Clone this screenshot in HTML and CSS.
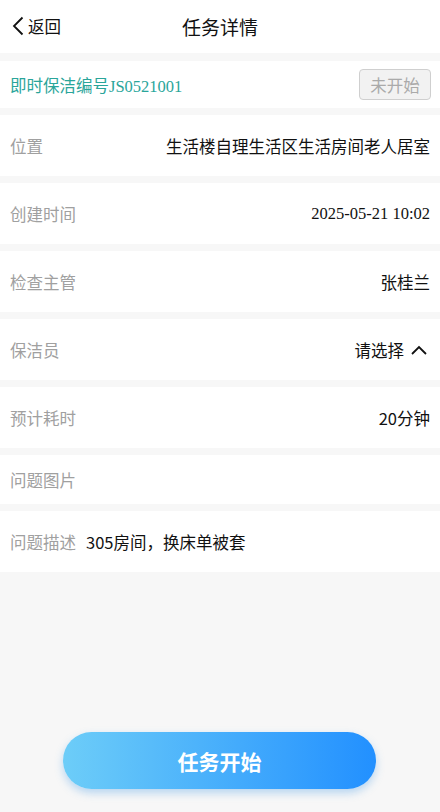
FILE: index.html
```html
<!DOCTYPE html>
<html lang="zh-CN">
  <head>
    <meta charset="UTF-8" />
    <meta name="viewport" content="width=device-width, initial-scale=1.0" />
    <title>任务详情</title>
    <link rel="stylesheet" href="styles.css">
  </head>
  <body>
    <header class="topbar">
      <a class="back">
        <svg width="12" height="20" viewBox="0 0 12 20">
          <path d="M10.5 1.5 L2 10 L10.5 18.5" fill="none" stroke="#111" stroke-width="1.8" />
        </svg>
        <span>返回</span>
      </a>
      <h1>任务详情</h1>
    </header>

    <div class="code-row">
      <span class="code">即时保洁编号<span class="serif">JS0521001</span></span>
      <span class="badge">未开始</span>
    </div>

    <div class="row">
      <span class="label">位置</span>
      <span class="value">生活楼自理生活区生活房间老人居室</span>
    </div>
    <div class="row">
      <span class="label">创建时间</span>
      <span class="value serif">2025-05-21 10:02</span>
    </div>
    <div class="row">
      <span class="label">检查主管</span>
      <span class="value">张桂兰</span>
    </div>
    <div class="row">
      <span class="label">保洁员</span>
      <span class="value picker">请选择
        <svg width="18" height="12" viewBox="0 0 18 12">
          <path d="M2 10 L9 3 L16 10" fill="none" stroke="#111" stroke-width="1.8" />
        </svg>
      </span>
    </div>
    <div class="row">
      <span class="label">预计耗时</span>
      <span class="value">20分钟</span>
    </div>
    <div class="row short">
      <span class="label">问题图片</span>
    </div>
    <div class="row desc">
      <span class="label">问题描述</span>
      <span class="text">305房间，换床单被套</span>
    </div>

    <div class="footer">
      <button class="start">任务开始</button>
    </div>
  </body>
</html>
```

FILE: styles.css
```css
body {
  font-family: "Noto Sans CJK SC", "Noto Sans", sans-serif;
  background-color: #f7f7f7;
  color: #111;
  margin: 0;
  width: 440px;
  height: 812px;
  display: flex;
  flex-direction: column;
  overflow: hidden;
}
.topbar {
  height: 53px;
  background-color: #fff;
  display: flex;
  align-items: center;
  justify-content: center;
  position: relative;
  margin-bottom: 8px;
}
.topbar h1 {
  margin: 0;
  font-size: 19px;
  font-weight: 400;
  line-height: 1;
}
.back {
  position: absolute;
  left: 12px;
  top: 16px;
  display: flex;
  align-items: center;
  gap: 4px;
  font-size: 16.5px;
  line-height: 20px;
}
.back svg {
  display: block;
}
.code-row {
  height: 47px;
  background-color: #fff;
  display: flex;
  align-items: center;
  justify-content: space-between;
  padding: 0 9px 0 10px;
  margin-bottom: 7px;
}
.code {
  color: #2aa59a;
  font-size: 16.5px;
}
.serif {
  font-family: "Liberation Serif", "Noto Sans CJK SC", serif;
}
.badge {
  width: 72px;
  height: 31px;
  box-sizing: border-box;
  border: 1px solid #cfcfcf;
  border-radius: 4px;
  background-color: #f2f2f2;
  color: #aaa;
  font-size: 16.5px;
  display: flex;
  align-items: center;
  justify-content: center;
}
.row {
  height: 61px;
  background-color: #fff;
  display: flex;
  align-items: center;
  justify-content: space-between;
  padding: 0 10px;
  margin-bottom: 7px;
  font-size: 16.5px;
}
.row.short {
  height: 49px;
}
.row.desc {
  justify-content: flex-start;
  gap: 10px;
}
.label {
  color: #a0a0a0;
}
.value {
  color: #111;
}
.picker {
  display: flex;
  align-items: center;
  gap: 6px;
  margin-right: 2px;
}
.picker svg {
  display: block;
}
.footer {
  margin-top: auto;
  display: flex;
  justify-content: center;
  padding-bottom: 23px;
  padding-right: 1px;
}
.start {
  width: 313px;
  height: 57px;
  border: none;
  border-radius: 29px;
  background: linear-gradient(90deg, #6dcdf8, #2290ff);
  box-shadow: 0 4px 8px rgba(60, 150, 230, 0.35);
  color: #fff;
  font-family: "Noto Sans CJK SC", sans-serif;
  font-size: 21px;
  font-weight: 700;
}
```
